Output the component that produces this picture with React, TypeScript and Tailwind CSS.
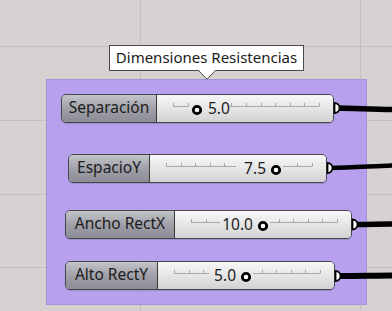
import React from "react";

type SliderProps = {
  label: string;
  labelW: number;
  value: string;
  circleX: number;
  textLeft: boolean;
  gap: [number, number];
  className: string;
};

function Track({ gap, circleX }: { gap: [number, number]; circleX: number }) {
  const start = 16;
  const end = 162;
  const ticks: number[] = [];
  for (let i = 0; i <= 10; i++) ticks.push(start + (i * (end - start)) / 10);
  const y = 11.5;
  return (
    <svg className="absolute left-0 top-0" width={177} height={29} viewBox="0 0 177 29">
      {gap[0] > start && <line x1={start} y1={y} x2={gap[0]} y2={y} stroke="#a8a8a8" strokeWidth={1} />}
      {gap[1] < end && <line x1={gap[1]} y1={y} x2={end} y2={y} stroke="#a8a8a8" strokeWidth={1} />}
      {ticks
        .filter((t) => t < gap[0] || t > gap[1])
        .map((t, i) => (
          <line key={i} x1={Math.round(t) + 0.5} y1={y - 3.5} x2={Math.round(t) + 0.5} y2={y} stroke="#a8a8a8" strokeWidth={1} />
        ))}
      <circle cx={circleX} cy={15} r={3.7} fill="#ffffff" stroke="#000000" strokeWidth={2.8} />
    </svg>
  );
}

function Slider({ label, labelW, value, circleX, textLeft, gap, className }: SliderProps) {
  return (
    <div
      className={`flex h-[29px] rounded-[5px] border border-[#474747] overflow-hidden shadow-[0_1px_1px_rgba(0,0,0,0.15)] ${className}`}
      style={{ width: labelW + 177 }}
    >
      <div
        className="flex items-center justify-center h-full border-r border-[#3a3a3a] bg-gradient-to-b from-[#c4c4ca] via-[#a0a0a9] to-[#8c8c96] text-[15.5px] text-[#1c1c1c] font-['Noto_Sans',sans-serif] leading-none"
        style={{ width: labelW - 1 }}
      >
        <span className="-mt-[1px]">{label}</span>
      </div>
      <div className="relative flex-1 h-full bg-gradient-to-b from-[#f7f7f7] via-[#e6e6e6] to-[#d2d2d2]">
        <Track gap={gap} circleX={circleX} />
        <span
          className="absolute top-[6px] text-[15.5px] leading-none text-[#1c1c1c] font-['Noto_Sans',sans-serif]"
          style={textLeft ? { right: 177 - circleX + 9 } : { left: circleX + 11 }}
        >
          {value}
        </span>
      </div>
    </div>
  );
}

export default function App() {
  return (
    <div className="relative w-[392px] h-[311px] overflow-hidden bg-[#d6d2d2] font-['Noto_Sans',sans-serif]">
      {/* canvas grid */}
      <div className="absolute left-[140px] top-0 w-px h-full bg-[#c3bfbf]" />
      <div className="absolute left-[360px] top-0 w-px h-full bg-[#c3bfbf]" />
      <div className="absolute left-0 top-[46px] w-full h-px bg-[#c3bfbf]" />
      <div className="absolute left-0 top-[120px] w-full h-px bg-[#c3bfbf]" />
      <div className="absolute left-0 top-[194px] w-full h-px bg-[#c3bfbf]" />
      <div className="absolute left-0 top-[267px] w-full h-px bg-[#c3bfbf]" />

      {/* group */}
      <div className="absolute left-[46px] top-[79px] w-[321px] h-[226px] bg-[rgba(176,150,244,0.82)] border border-[#a592dc] flex flex-col pt-[14px]">
        <Slider label="Separación" labelW={96} value="5.0" circleX={40} textLeft={false} gap={[31, 72]} className="ml-[14px]" />
        <Slider label="EspacioY" labelW={82} value="7.5" circleX={126} textLeft={true} gap={[86, 133]} className="ml-[21px] mt-[31px]" />
        <Slider label="Ancho RectX" labelW={110} value="10.0" circleX={88} textLeft={true} gap={[45, 95]} className="ml-[18px] mt-[27px]" />
        <Slider label="Alto RectY" labelW={93} value="5.0" circleX={88} textLeft={true} gap={[51, 95]} className="ml-[18px] mt-[22px]" />
      </div>

      {/* wires and ports */}
      <svg className="absolute left-0 top-0" width={392} height={311} viewBox="0 0 392 311">
        <path d="M336 108 C 360 108.5, 375 109.5, 395 109.5" stroke="#000" strokeWidth={5.5} fill="none" />
        <path d="M329 168 C 355 167.5, 375 166, 395 165.5" stroke="#000" strokeWidth={4.5} fill="none" />
        <path d="M354 224.5 C 370 224.5, 380 224, 395 224" stroke="#000" strokeWidth={5.5} fill="none" />
        <path d="M337 276 C 360 276, 375 275.5, 395 275.5" stroke="#000" strokeWidth={6} fill="none" />
        <path d="M334.5 103 A 5 5 0 0 1 334.5 113 Z" fill="#fff" stroke="#000" strokeWidth={1.8} />
        <path d="M327.5 163 A 5 5 0 0 1 327.5 173 Z" fill="#fff" stroke="#000" strokeWidth={1.8} />
        <path d="M352.5 219.5 A 5 5 0 0 1 352.5 229.5 Z" fill="#fff" stroke="#000" strokeWidth={1.8} />
        <path d="M335.5 271 A 5 5 0 0 1 335.5 281 Z" fill="#fff" stroke="#000" strokeWidth={1.8} />
      </svg>

      {/* tooltip */}
      <div className="absolute left-[109px] top-[45px] w-[195px] h-[26px] bg-white border border-[#4a4a4a] flex items-center justify-center text-[15px] text-[#1a1a1a] leading-none">
        <span className="-mt-[1px]">Dimensiones Resistencias</span>
      </div>
      <svg className="absolute left-[198px] top-[70px]" width={18} height={10} viewBox="0 0 18 10">
        <path d="M0.5 0.5 L9 9.2 L17.5 0.5" fill="#fff" stroke="#4a4a4a" strokeWidth={1} />
        <rect x={1.5} y={0} width={15} height={1} fill="#fff" />
      </svg>
    </div>
  );
}
